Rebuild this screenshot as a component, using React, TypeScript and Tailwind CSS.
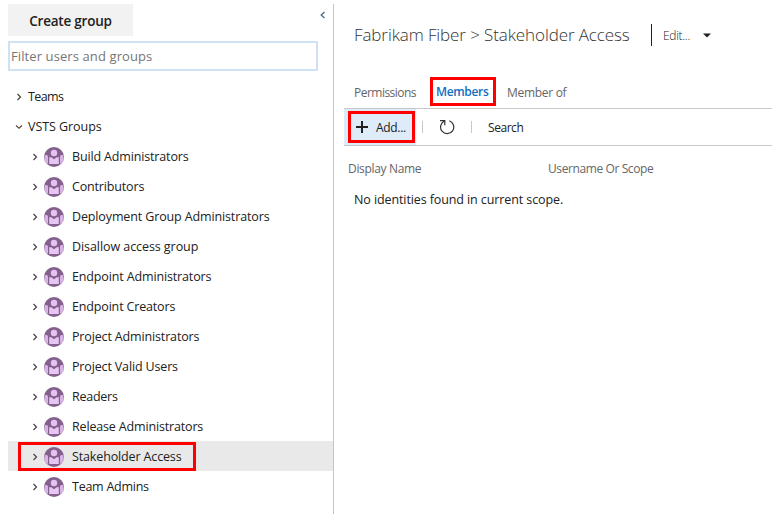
const groups = [
  { name: "Build Administrators", tracking: "tracking-[-0.15px]" },
  { name: "Contributors", tracking: "tracking-[-0.16px]" },
  { name: "Deployment Group Administrators", tracking: "tracking-[-0.13px]" },
  { name: "Disallow access group", tracking: "tracking-[-0.07px]" },
  { name: "Endpoint Administrators", tracking: "tracking-[-0.14px]" },
  { name: "Endpoint Creators", tracking: "tracking-[-0.16px]" },
  { name: "Project Administrators", tracking: "tracking-[-0.15px]" },
  { name: "Project Valid Users", tracking: "tracking-[-0.15px]" },
  { name: "Readers", tracking: "tracking-[-0.25px]" },
  { name: "Release Administrators", tracking: "tracking-[-0.16px]" },
  { name: "Stakeholder Access", tracking: "tracking-[-0.14px]" },
  { name: "Team Admins", tracking: "tracking-[-0.25px]" },
];

function ChevronRight() {
  return (
    <svg className="mt-px h-2 w-2 shrink-0" viewBox="0 0 8 8" fill="none" stroke="#444" strokeWidth="1.2">
      <path d="M2.500 1L5.500 4L2.500 7" />
    </svg>
  );
}

function ChevronDown() {
  return (
    <svg className="mt-px h-2 w-2 shrink-0" viewBox="0 0 8 8" fill="none" stroke="#5a4a3a" strokeWidth="1.2">
      <path d="M1 2.500L4 5.300L7 2.500" />
    </svg>
  );
}

function GroupAvatar() {
  return (
    <svg className="block h-5 w-5 shrink-0" viewBox="0 0 20 20">
      <circle cx="10" cy="10" r="10" fill="#85608f" />
      <circle cx="10" cy="6" r="3.200" fill="#e3c3ef" />
      <path d="M5.200 10.300H7.200L10 12.200L12.800 10.300H14.800V17H5.200Z" fill="#e6c6f2" />
      <path d="M0.900 8.400C2 7.700 3.600 8.200 4 9.300V17C1 15.500 -0.500 12 0.900 8.400Z" fill="#d8b4e5" />
      <path d="M19.100 8.400C18 7.700 16.400 8.200 16 9.300V17C19 15.500 20.500 12 19.100 8.400Z" fill="#d8b4e5" />
    </svg>
  );
}

function Sidebar() {
  return (
    <aside className="mt-1 ml-2 h-[510px] w-[326px] shrink-0 border-r border-[#c4c4c4]">
      <div className="flex items-start justify-between pr-[6px]">
        <button className="h-8 w-[125px] bg-[#f2f2f2] pt-[3px] text-[13.5px] leading-none font-semibold tracking-[-0.22px] text-[#212121]">
          Create group
        </button>
        <svg className="mt-[7px] h-2 w-2" viewBox="0 0 8 8" fill="none" stroke="#4a6a8a" strokeWidth="1.3">
          <path d="M5.500 1L2.200 4L5.500 7" />
        </svg>
      </div>
      <input
        className="mt-[5px] block h-[30px] w-[310px] border-2 border-[#cfe2f3] px-px text-[13px] tracking-[0.1px] outline-none placeholder:text-[#767676]"
        placeholder="Filter users and groups"
      />
      <div className="mt-[10px] text-[12.5px] text-[#212121]">
        <div className="flex h-[30px] items-center pl-[7px]">
          <ChevronRight />
          <span className="mt-[3px] ml-[5px] tracking-[-0.6px]">Teams</span>
        </div>
        <div className="flex h-[30px] items-center pl-[7px]">
          <ChevronDown />
          <span className="mt-[3px] ml-[5px] tracking-[-0.06px]">VSTS Groups</span>
        </div>
        {groups.map((g) => {
          const selected = g.name === "Stakeholder Access";
          return (
            <div
              key={g.name}
              className={
                "relative flex h-[30px] items-center pl-[23px] " + (selected ? "bg-[#e9e9e9]" : "")
              }
            >
              <ChevronRight />
              <span className="mt-[2px] ml-[5px]">
                <GroupAvatar />
              </span>
              <span className={"mt-[3px] ml-2 whitespace-nowrap " + g.tracking}>{g.name}</span>
              {selected && (
                <div className="absolute top-px left-[10px] h-[29px] w-[178px] border-3 border-[#ff0000]" />
              )}
            </div>
          );
        })}
      </div>
    </aside>
  );
}

function Details() {
  return (
    <main className="min-w-0 flex-1 pl-[10px]">
      <header className="flex h-[70px] items-center pl-[10px]">
        <h1 className="mb-[2px] w-[297px] text-[17px] leading-none font-light tracking-[-0.1px] whitespace-nowrap text-[#333]">
          Fabrikam Fiber &gt; Stakeholder Access
        </h1>
        <div className="flex h-[22px] items-center border-l border-[#212121] pl-[11px] text-[12px] text-[#212121]">
          <span className="mt-[2px] w-[40px] font-light tracking-[-0.3px]">Edit...</span>
          <svg className="h-[5px] w-2" viewBox="0 0 8 5" fill="#212121">
            <path d="M0 0.500H8L4 4.500Z" />
          </svg>
        </div>
      </header>
      <nav className="flex h-[38px] items-center pt-[5px] text-[12px] whitespace-nowrap text-[#666]">
        <span className="mt-[2px] w-[76px] pl-[10px] tracking-[-0.55px]">
          <span className="tracking-[-0.52px]">Permissions</span>
        </span>
        <span className="ml-[10px] flex h-[29px] w-[66px] items-center border-3 border-[#ff0000] pt-px pl-[3px] font-semibold tracking-[-0.35px] text-[#106ebe]">
          Members
        </span>
        <span className="mt-[2px] ml-[11px] tracking-[-0.3px]">Member of</span>
      </nav>
      <div className="flex h-[38px] items-stretch border-y border-[#c8c8c8] text-[12px] text-[#212121]">
        <button className="relative flex w-[72px] items-center bg-[#deecf9] pl-3">
          <svg className="h-3 w-3" viewBox="0 0 12 12" stroke="#212121" strokeWidth="2">
            <path d="M6 0V12M0 6H12" />
          </svg>
          <span className="mt-[2px] ml-2 tracking-[-0.3px]">Add...</span>
          <span className="absolute top-[2px] left-1 h-8 w-[67px] border-3 border-[#ff0000]" />
        </button>
        <div className="flex items-center">
          <span className="ml-[6px] h-3 w-px bg-[#c8c8c8]" />
          <svg className="ml-4 h-4 w-4" viewBox="0 0 16 16" fill="none" stroke="#333" strokeWidth="1.200">
            <path d="M1 1.600H5.800V6.300M5.500 2A6.600 6.600 0 1 0 10.300 1.800" />
          </svg>
          <span className="ml-4 h-3 w-px bg-[#c8c8c8]" />
          <span className="mt-[2px] ml-4 tracking-[-0.45px]">Search</span>
        </div>
      </div>
      <div className="flex h-[43px] items-center pt-[2px] pl-1 text-[12px] text-[#666]">
        <span className="w-[200px] tracking-[-0.33px]">Display Name</span>
        <span className="tracking-[-0.4px]">Username Or Scope</span>
      </div>
      <p className="pt-[2px] pl-[10px] text-[12.5px] tracking-[-0.1px] text-[#212121]">
        No identities found in current scope.
      </p>
    </main>
  );
}

export default function App() {
  return (
    <div className="flex h-[516px] w-[772px] overflow-hidden bg-white font-['Open_Sans','Noto_Sans',sans-serif]">
      <Sidebar />
      <Details />
    </div>
  );
}
